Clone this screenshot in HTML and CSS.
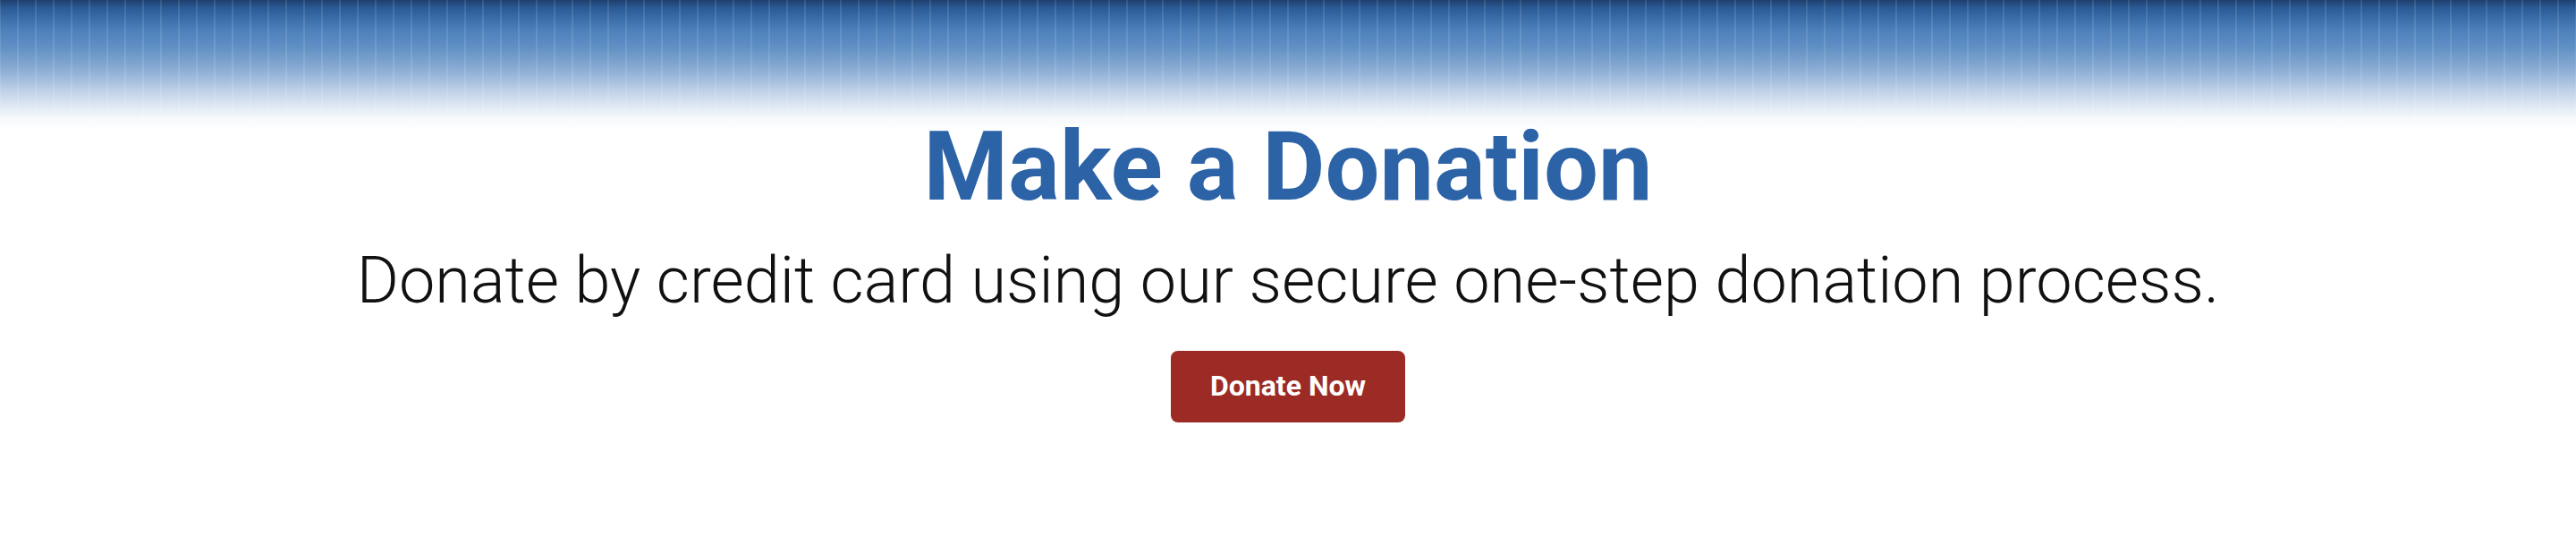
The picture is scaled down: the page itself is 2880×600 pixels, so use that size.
FILE: index.html
```html
<!DOCTYPE html>
<html lang="en">
<head>
<meta charset="utf-8">
<title>Make a Donation</title>
<link rel="stylesheet" href="styles.css">
</head>
<body>
<section class="donate">
  <h1 class="donate-title">Make a Donation</h1>
  <p class="donate-text">Donate by credit card using our secure one-step donation process.</p>
  <a class="donate-btn" href="#">Donate Now</a>
</section>
</body>
</html>
```
FILE: styles.css
```css
html, body {
  margin: 0;
  padding: 0;
  background: #ffffff;
}
body {
  font-family: Roboto, "Liberation Sans", Arial, sans-serif;
  width: 2880px;
  height: 600px;
  overflow: hidden;
}
.donate {
  display: flex;
  flex-direction: column;
  align-items: center;
  height: 600px;
  padding-top: 121px;
  box-sizing: border-box;
  background-image:
    repeating-linear-gradient(90deg,
      rgba(255,255,255,0.11) 0 1px,
      rgba(255,255,255,0) 1px 19px,
      rgba(255,255,255,0.11) 19px 20px),
    linear-gradient(180deg,
      #1e3e6d 0px,
      #2a5892 8px,
      #3a6ca8 20px,
      #4f82bb 35px,
      #5d8dc3 50px,
      #7aa1cd 68px,
      #9ab7da 85px,
      #c0d2e8 102px,
      #e2eaf4 120px,
      #f6f8fb 132px,
      #ffffff 145px);
  background-size: 100% 150px, 100% 150px;
  background-repeat: no-repeat;
}
.donate-title {
  margin: 0;
  font-size: 108px;
  line-height: 130px;
  font-weight: 700;
  color: #2c63a7;
}
.donate-text {
  margin: 21px 0 0;
  font-size: 72px;
  line-height: 84px;
  font-weight: 300;
  color: #111111;
}
.donate-btn {
  margin-top: 36px;
  display: block;
  padding: 19px 44px 21px;
  font-size: 32px;
  line-height: 40px;
  font-weight: 700;
  color: #ffffff;
  background: #9c2b25;
  border-radius: 8px;
  text-decoration: none;
}
```
